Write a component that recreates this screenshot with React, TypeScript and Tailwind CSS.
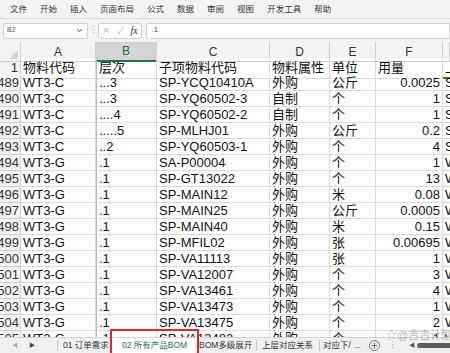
import { ChevronDown, Plus } from 'lucide-react';

// Sheet rows shown in the viewport
type Row = { n: string; a: string; b: string; c: string; d: string; e: string; f: string; g: string };

const rows: Row[] = [
  { n: '489', a: 'WT3-C', b: '...3', c: 'SP-YCQ10410A', d: '外购', e: '公斤', f: '0.0025', g: 'SP' },
  { n: '490', a: 'WT3-C', b: '...3', c: 'SP-YQ60502-3', d: '自制', e: '个', f: '1', g: 'SP' },
  { n: '491', a: 'WT3-C', b: '....4', c: 'SP-YQ60502-2', d: '自制', e: '个', f: '1', g: 'SP' },
  { n: '492', a: 'WT3-C', b: '.....5', c: 'SP-MLHJ01', d: '外购', e: '公斤', f: '0.2', g: 'SP' },
  { n: '493', a: 'WT3-C', b: '..2', c: 'SP-YQ60503-1', d: '外购', e: '个', f: '4', g: 'SP' },
  { n: '494', a: 'WT3-G', b: '.1', c: 'SA-P00004', d: '外购', e: '个', f: '1', g: 'WT' },
  { n: '495', a: 'WT3-G', b: '.1', c: 'SP-GT13022', d: '外购', e: '个', f: '13', g: 'WT' },
  { n: '496', a: 'WT3-G', b: '.1', c: 'SP-MAIN12', d: '外购', e: '米', f: '0.08', g: 'WT' },
  { n: '497', a: 'WT3-G', b: '.1', c: 'SP-MAIN25', d: '外购', e: '公斤', f: '0.0005', g: 'WT' },
  { n: '498', a: 'WT3-G', b: '.1', c: 'SP-MAIN40', d: '外购', e: '米', f: '0.15', g: 'WT' },
  { n: '499', a: 'WT3-G', b: '.1', c: 'SP-MFIL02', d: '外购', e: '张', f: '0.00695', g: 'WT' },
  { n: '500', a: 'WT3-G', b: '.1', c: 'SP-VA11113', d: '外购', e: '张', f: '1', g: 'WT' },
  { n: '501', a: 'WT3-G', b: '.1', c: 'SP-VA12007', d: '外购', e: '个', f: '3', g: 'WT' },
  { n: '502', a: 'WT3-G', b: '.1', c: 'SP-VA13461', d: '外购', e: '个', f: '4', g: 'WT' },
  { n: '503', a: 'WT3-G', b: '.1', c: 'SP-VA13473', d: '外购', e: '个', f: '1', g: 'WT' },
  { n: '504', a: 'WT3-G', b: '.1', c: 'SP-VA13475', d: '外购', e: '个', f: '2', g: 'WT' },
  { n: '505', a: 'WT3-G', b: '.1', c: 'SP-VA13483', d: '外购', e: '个', f: '1', g: 'WT' },
];

const menus = ['文件', '开始', '插入', '页面布局', '公式', '数据', '审阅', '视图', '开发工具', '帮助'];
const cols = ['A', 'B', 'C', 'D', 'E', 'F', ''];

const grid = 'grid grid-cols-[21px_75px_61px_113px_60px_46px_67px_1fr]';
const cell = 'border-r border-b border-[#dadada] px-[2px] whitespace-nowrap overflow-hidden flex items-center';

export default function App() {
  return (
    <div className="relative w-[450px] h-[353px] overflow-hidden bg-white text-[#111] font-['Liberation_Sans','Noto_Sans_CJK_SC',sans-serif]">
      {/* Ribbon tabs */}
      <div className="h-[19px] bg-[#f3f3f3] border-b border-[#dcdcdc] flex items-center gap-[13px] pl-[10px] text-[8.5px] text-[#333]">
        {menus.map((m) => (
          <span key={m}>{m}</span>
        ))}
      </div>

      {/* Formula bar */}
      <div className="h-[23px] bg-[#f3f3f3] flex items-center pl-[3px]">
        <div className="w-[85px] h-[16px] bg-white border border-[#d0d0d0] rounded-[2px] flex items-center justify-between px-[3px]">
          <span className="text-[7px] text-[#555]">B2</span>
          <ChevronDown className="w-[9px] h-[9px] text-[#444]" strokeWidth={2.5} />
        </div>
        <span className="w-[10px] text-center text-[9px] text-[#aaa] leading-none">⋮</span>
        <div className="w-[44px] h-[16px] bg-white border border-[#d0d0d0] rounded-[2px] flex items-center justify-around text-[10px] text-[#c4c4c4]">
          <span>✕</span>
          <span>✓</span>
          <span className="font-['Liberation_Serif',serif] italic text-[#333]">fx</span>
        </div>
        <div className="ml-[4px] flex-1 h-[16px] bg-white border border-[#d0d0d0] rounded-l-[2px] flex items-center pl-[5px] text-[7px] text-[#333]">
          .1
        </div>
      </div>

      {/* Sheet */}
      <div className="h-[295px] overflow-hidden text-[13px]">
        {/* Column headers */}
        <div className={`${grid} h-[16px] bg-[#f3f3f3] text-[12px] text-[#333]`}>
          <div className="relative border-r border-b border-[#cfcfcf]">
            <div className="absolute right-[2px] bottom-[2px] w-0 h-0 border-l-[9px] border-l-transparent border-b-[9px] border-b-[#d6d6d6]" />
          </div>
          {cols.map((c) =>
            c === 'B' ? (
              <div key={c} className="bg-[#d4d4d4] border-b-2 border-[#217346] border-r border-r-[#cfcfcf] text-[#217346] flex items-center justify-center">
                {c}
              </div>
            ) : (
              <div key={c + 'h'} className="border-r border-b border-[#cfcfcf] flex items-center justify-center">
                {c}
              </div>
            )
          )}
        </div>

        {/* Header row 1 */}
        <div className={`${grid} h-[17px]`}>
          <div className="bg-[#f3f3f3] border-r border-b border-[#cfcfcf] text-[#333] flex items-center justify-end pr-[2px]">1</div>
          <div className={cell}>物料代码</div>
          <div className={`${cell} border-l border-l-[#b8b8b8]`}>层次</div>
          <div className={cell}>子项物料代码</div>
          <div className={cell}>物料属性</div>
          <div className={cell}>单位</div>
          <div className={cell}>用量</div>
          <div className="border-b-2 border-[#7a5c1e] px-[2px] overflow-hidden whitespace-nowrap flex items-center">上层</div>
        </div>

        {rows.map((r) => (
          <div key={r.n} className={`${grid} h-[16px]`}>
            <div className="bg-[#f3f3f3] border-r border-b border-[#cfcfcf] text-[#333] flex items-center justify-end pr-[1px] overflow-hidden whitespace-nowrap">
              {r.n}
            </div>
            <div className={cell}>{r.a}</div>
            <div className={`${cell} border-l border-l-[#b8b8b8] pl-[2px]`}>{r.b}</div>
            <div className={cell}>{r.c}</div>
            <div className={cell}>{r.d}</div>
            <div className={cell}>{r.e}</div>
            <div className={`${cell} justify-end pr-[2px]`}>{r.f}</div>
            <div className="border-b border-[#dadada] px-[2px] overflow-hidden whitespace-nowrap flex items-center">{r.g}</div>
          </div>
        ))}
      </div>

      {/* Sheet tabs */}
      <div className="h-[16px] bg-[#f0f0f0] border-t border-[#d4d4d4] flex items-center text-[8.5px] text-[#333] whitespace-nowrap">
        <div className="w-[57px] flex items-center">
          <span className="w-[20px] pl-[12px] text-[#aaa] text-[6px]">◀</span>
          <span className="w-[16px] pl-[9px] text-[#1f5e37] text-[6px]">▶</span>
        </div>
        <span className="h-[11px] border-l border-[#c8c8c8]" />
        <span className="w-[54px] pl-[5px]">01 订单需求</span>
        <span className="h-full w-[84px] bg-white pl-[10px] flex items-center text-[#217346]">02 所有产品BOM</span>
        <span className="w-[60px] pl-[3px]">BOM多级展开</span>
        <span className="h-[11px] border-l border-[#c8c8c8]" />
        <span className="w-[62px] pl-[5px]">上层对应关系</span>
        <span className="h-[11px] border-l border-[#c8c8c8]" />
        <span className="pl-[3px]">对应下/</span>
        <span className="pl-[3px] text-[#217346]">...</span>
        <Plus className="ml-[8px] w-[11px] h-[11px] text-[#555] border border-[#777] rounded-full" strokeWidth={2} />
        <span className="ml-[8px] text-[#aaa]">⋮</span>
        <span className="ml-[12px] text-[6px] text-[#555]">◀</span>
        <span className="ml-[2px] flex-1 h-[5px] rounded-l-full bg-[#5f5f5f]" />
      </div>

      {/* Annotation box around the active sheet */}
      <div className="absolute left-[110px] top-[329px] w-[89px] h-[30px] border-2 border-[#e3262b] pointer-events-none" />

      {/* Watermark */}
      <div className="absolute left-[386px] top-[327px] text-[11px] text-[#9a9a9a] opacity-70 pointer-events-none whitespace-nowrap">
        ☆@吉吉计划
      </div>
    </div>
  );
}
